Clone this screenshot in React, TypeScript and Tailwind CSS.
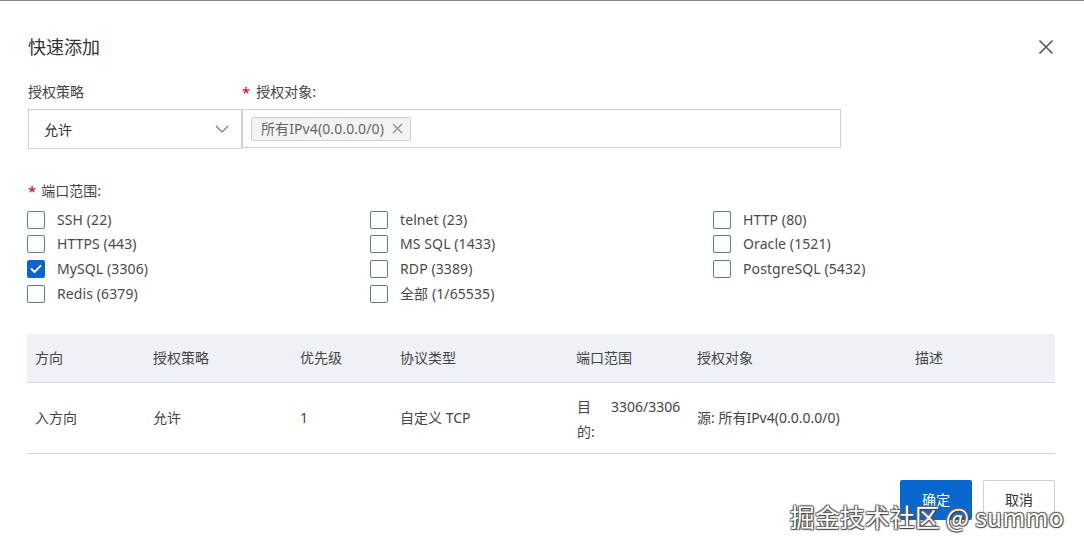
import React from "react";

const font = "font-['Noto_Sans','Noto_Sans_CJK_SC',sans-serif]";

function Checkbox({ label, checked }: { label: string; checked?: boolean }) {
  return (
    <div className="flex items-center h-[24.6px]">
      <div
        className={
          "w-[18px] h-[18px] rounded-[2px] border flex items-center justify-center " +
          (checked ? "bg-[#0a66cc] border-[#0a66cc]" : "bg-white border-[#5f7a96]")
        }
      >
        {checked && (
          <svg width="12" height="10" viewBox="0 0 12 10" fill="none">
            <path d="M1.5 5 L4.5 8 L10.5 1.8" stroke="white" strokeWidth="1.8" strokeLinecap="round" strokeLinejoin="round" />
          </svg>
        )}
      </div>
      <span className="ml-[12px] text-[14px] text-[#4a4a4a] leading-none tracking-[0.1px]">{label}</span>
    </div>
  );
}

export default function App() {
  const cols: { label: string; checked?: boolean }[][] = [
    [{ label: "SSH (22)" }, { label: "HTTPS (443)" }, { label: "MySQL (3306)", checked: true }, { label: "Redis (6379)" }],
    [{ label: "telnet (23)" }, { label: "MS SQL (1433)" }, { label: "RDP (3389)" }, { label: "全部 (1/65535)" }],
    [{ label: "HTTP (80)" }, { label: "Oracle (1521)" }, { label: "PostgreSQL (5432)" }],
  ];
  const widths = ["w-[118px]", "w-[147px]", "w-[100px]", "w-[176px]", "w-[121px]", "w-[218px]", "flex-1"];
  const headers = ["方向", "授权策略", "优先级", "协议类型", "端口范围", "授权对象", "描述"];

  return (
    <div className={"relative w-[1084px] h-[547px] bg-white border-t border-[#8c8c8c] overflow-hidden text-[#333] " + font}>
      {/* Header */}
      <div className="flex items-center justify-between pl-[28px] pr-[30px] pt-[33px]">
        <h1 className="text-[18px] leading-[26px] text-[#333] font-normal">快速添加</h1>
        <svg width="16" height="16" viewBox="0 0 16 16" className="mt-[-1px]">
          <path d="M1.5 1.5 L14.5 14.5 M14.5 1.5 L1.5 14.5" stroke="#555" strokeWidth="1.6" />
        </svg>
      </div>

      {/* Form row */}
      <div className="flex pl-[28px] mt-[22px]">
        <div className="w-[214px] flex flex-col">
          <div className="text-[14px] leading-[20px] text-[#444]">授权策略</div>
          <div className="mt-[7px] h-[40px] border border-[#d0d0d0] flex items-center justify-between pl-[15px] pr-[12px]">
            <span className="text-[14px] text-[#333]">允许</span>
            <svg width="14" height="8" viewBox="0 0 14 8">
              <path d="M1 1 L7 7 L13 1" stroke="#777" strokeWidth="1.2" fill="none" />
            </svg>
          </div>
        </div>
        <div className="w-[599px] flex flex-col">
          <div className="text-[14px] leading-[20px] text-[#444] flex items-center">
            <span className="text-[#c00] mr-[6px] text-[15px]">*</span>
            <span>授权对象:</span>
          </div>
          <div className="mt-[7px] h-[39px] border border-[#d0d0d0] flex items-center pl-[8px]">
            <div className="h-[24px] border border-[#cfcfcf] bg-[#f3f3f3] rounded-[2px] flex items-center pl-[9px] pr-[7px]">
              <span className="text-[14px] text-[#666] tracking-[0.1px]">所有IPv4(0.0.0.0/0)</span>
              <svg width="11" height="11" viewBox="0 0 11 11" className="ml-[8px]">
                <path d="M1 1 L10 10 M10 1 L1 10" stroke="#888" strokeWidth="1.1" />
              </svg>
            </div>
          </div>
        </div>
      </div>

      {/* Port range */}
      <div className="pl-[27px] mt-[32px]">
        <div className="text-[14px] leading-[20px] text-[#444] flex items-center pl-[1px]">
          <span className="text-[#c00] mr-[5px] text-[15px]">*</span>
          <span>端口范围:</span>
        </div>
        <div className="flex mt-[6.5px]">
          {cols.map((col, i) => (
            <div key={i} className="w-[343px] flex flex-col">
              {col.map((c) => (
                <Checkbox key={c.label} label={c.label} checked={c.checked} />
              ))}
            </div>
          ))}
        </div>
      </div>

      {/* Table */}
      <div className="ml-[27px] w-[1028px] mt-[28px] text-[14px]">
        <div className="flex h-[49px] bg-[#eef1f6] border-b border-[#d6d6d6] items-center">
          {headers.map((h, i) => (
            <div key={h} className={widths[i] + " pl-[8px] text-[#444]"}>
              {h}
            </div>
          ))}
        </div>
        <div className="flex h-[71px] border-b border-[#d6d6d6] items-center text-[#444]">
          <div className={widths[0] + " pl-[8px]"}>入方向</div>
          <div className={widths[1] + " pl-[8px]"}>允许</div>
          <div className={widths[2] + " pl-[8px]"}>1</div>
          <div className={widths[3] + " pl-[8px]"}>自定义 TCP</div>
          <div className={widths[4] + " pl-[9px] flex items-start mt-[3px]"}>
            <span className="w-[20px] leading-[25px]">目的:</span>
            <span className="ml-[14px] leading-[25px]">3306/3306</span>
          </div>
          <div className={widths[5] + " pl-[8px]"}>源: 所有IPv4(0.0.0.0/0)</div>
          <div className={widths[6] + " pl-[8px]"}></div>
        </div>
      </div>

      {/* Buttons */}
      <div className="flex justify-end pr-[29px] mt-[26px] gap-[11px]">
        <button className="w-[72px] h-[40px] rounded-[2px] bg-[#0867cf] text-white text-[14px]">确定</button>
        <button className="w-[72px] h-[40px] rounded-[2px] border border-[#cfcfcf] bg-white text-[#333] text-[14px]">取消</button>
      </div>

      {/* Watermark */}
      <div className="absolute left-[790px] top-[497px] text-[24.7px] leading-[36px] text-white tracking-[0.3px] [text-shadow:1px_1px_1px_#444,-1px_-1px_1px_#666,1px_-1px_1px_#666,-1px_1px_1px_#666] font-['Noto_Sans_CJK_SC',sans-serif]">
        掘金技术社区 @ summo
      </div>
    </div>
  );
}
